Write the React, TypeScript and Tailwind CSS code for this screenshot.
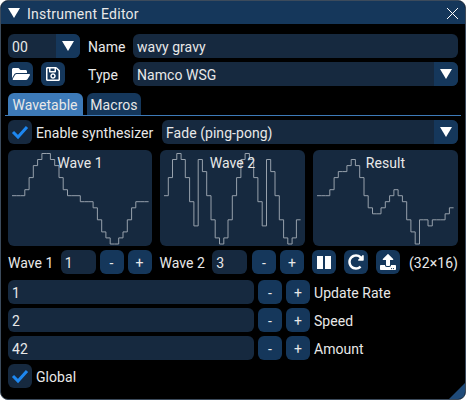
import { FaFolderOpen, FaRegSave, FaRedoAlt, FaUpload } from "react-icons/fa";

const W1 = [8,8,8,9,11,13,14,15,15,14,13,11,9,8,8,8,7,7,7,6,4,2,1,0,0,1,2,4,6,7,7,7];
const W2 = [8,11,14,15,14,11,7,3,14,12,8,4,1,0,1,4,8,11,14,15,14,11,7,3,14,12,8,4,1,0,1,4];
const W3 = [8,8,8,9,11,12,12,13,14,13,11,8,6,5,5,6,7,8,9,8,7,4,2,0,4,4,3,4,4,4,5,6];

function Tri({ className = "" }: { className?: string }) {
  return (
    <svg width="14" height="12" viewBox="0 0 14 12" className={className}>
      <polygon points="1,1 13,1 7,11" fill="#ffffff" />
    </svg>
  );
}

function Txt({ children, className = "" }: { children: React.ReactNode; className?: string }) {
  return <span className={`pt-[2px] ${className}`}>{children}</span>;
}

function Check() {
  return (
    <div className="w-6 h-6 rounded-md bg-[#16293f] flex items-center justify-center shrink-0">
      <svg width="18" height="16" viewBox="0 0 18 16">
        <polyline points="2,8 7,13 16,3" fill="none" stroke="#1d87f0" strokeWidth="3" />
      </svg>
    </div>
  );
}

function Combo({ text, className = "" }: { text: string; className?: string }) {
  return (
    <div className={`h-6 rounded-md bg-[#16293f] flex items-center overflow-hidden ${className}`}>
      <Txt className="flex-1 pl-[4px]">{text}</Txt>
      <div className="w-6 h-6 bg-[#15375b] flex items-center justify-center">
        <Tri />
      </div>
    </div>
  );
}

function Input({ text, className = "" }: { text: string; className?: string }) {
  return (
    <div className={`h-6 rounded-md bg-[#16293f] flex items-center pl-[4px] ${className}`}>
      <Txt>{text}</Txt>
    </div>
  );
}

function Btn({ children, className = "" }: { children: React.ReactNode; className?: string }) {
  return (
    <div className={`w-6 h-6 rounded-md bg-[#15375b] flex items-center justify-center shrink-0 ${className}`}>
      {children}
    </div>
  );
}

function Wave({ data, label, className = "" }: { data: number[]; label: string; className?: string }) {
  let pts = "";
  data.forEach((l, i) => {
    const y = (3.5 + (15 - l) * 6.03).toFixed(1);
    pts += `${(4 + i * 4.27).toFixed(1)},${y} ${(4 + (i + 1) * 4.27).toFixed(1)},${y} `;
  });
  return (
    <div className={`relative h-24 rounded-md bg-[#16293f] overflow-hidden ${className}`}>
      <svg width="145" height="96" viewBox="0 0 145 96" className="block">
        <polyline points={pts} fill="none" stroke="#97a1ac" strokeWidth="1" />
      </svg>
      <div className="absolute inset-x-0 top-[6px] text-center">{label}</div>
    </div>
  );
}

function ParamRow({ value, label }: { value: string; label: string }) {
  return (
    <div className="flex items-center gap-1">
      <Input text={value} className="w-[246px]" />
      <Btn><Txt>-</Txt></Btn>
      <Btn><Txt>+</Txt></Btn>
      <Txt>{label}</Txt>
    </div>
  );
}

export default function App() {
  return (
    <div
      className="relative w-[466px] h-[400px] overflow-hidden rounded-[8px] border border-[#3c4b5c] bg-black text-[14px] leading-none tracking-[0.05px] text-[#e8e8e8]"
      style={{ fontFamily: "Roboto, sans-serif" }}
    >
      <div className="h-[23px] bg-[#15375b] flex items-center pl-[6px] pr-[6px]">
        <Tri />
        <Txt className="ml-[6px] flex-1 tracking-[0.25px]">Instrument Editor</Txt>
        <svg width="14" height="14" viewBox="0 0 14 14">
          <path d="M2 2 L13 13 M13 2 L2 13" stroke="#ffffff" strokeWidth="1" fill="none" />
        </svg>
      </div>
      <div className="px-[7px] pt-[10px] flex flex-col">
        <div className="flex items-center">
          <Combo text="00" className="w-[72px]" />
          <Txt className="w-[45px] ml-2">Name</Txt>
          <Input text="wavy gravy" className="flex-1" />
        </div>
        <div className="flex items-center mt-1">
          <Btn className="w-[25px]"><FaFolderOpen size={18} color="#fff" /></Btn>
          <Btn className="ml-2"><FaRegSave size={16} color="#fff" /></Btn>
          <Txt className="w-[45px] ml-[23px]">Type</Txt>
          <Combo text="Namco WSG" className="flex-1" />
        </div>
        <div className="flex items-end gap-1 mt-[7px] h-[22px]">
          <div className="h-[22px] w-[75px] pr-px rounded-t-md bg-[#3d7ab8] flex items-center justify-center"><Txt>Wavetable</Txt></div>
          <div className="h-[22px] w-[54px] rounded-t-md bg-[#15375b] flex items-center justify-center"><Txt>Macros</Txt></div>
        </div>
        <div className="h-px bg-[#3d7ab8] -mx-[3px]" />
        <div className="flex items-center mt-1">
          <Check />
          <Txt className="ml-1 w-[126px]">Enable synthesizer</Txt>
          <Combo text="Fade (ping-pong)" className="flex-1" />
        </div>
        <div className="flex mt-[6px]">
          <Wave data={W1} label="Wave 1" className="w-[144px]" />
          <Wave data={W2} label="Wave 2" className="w-[145px] ml-2" />
          <Wave data={W3} label="Result" className="w-[145px] ml-2" />
        </div>
        <div className="flex items-center mt-1">
          <Txt className="w-[53px]">Wave 1</Txt>
          <Input text="1" className="w-[35px]" />
          <Btn className="ml-1"><Txt>-</Txt></Btn>
          <Btn className="ml-1"><Txt>+</Txt></Btn>
          <Txt className="ml-2 w-[53px]">Wave 2</Txt>
          <Input text="3" className="w-[35px]" />
          <Btn className="ml-[5px]"><Txt>-</Txt></Btn>
          <Btn className="ml-1"><Txt>+</Txt></Btn>
          <Btn className="ml-2">
            <svg width="16" height="16" viewBox="0 0 16 16">
              <path d="M1 2h6v13H1zM9 2h6v13H9z" fill="#fff" />
            </svg>
          </Btn>
          <Btn className="ml-2"><FaRedoAlt size={16} color="#fff" /></Btn>
          <Btn className="ml-2"><FaUpload size={16} color="#fff" /></Btn>
          <Txt className="ml-[9px]">(32×16)</Txt>
        </div>
        <div className="flex flex-col gap-1 mt-[6px]">
          <ParamRow value="1" label="Update Rate" />
          <ParamRow value="2" label="Speed" />
          <ParamRow value="42" label="Amount" />
          <div className="flex items-center">
            <Check />
            <Txt className="ml-1">Global</Txt>
          </div>
        </div>
      </div>
      <svg width="16" height="16" viewBox="0 0 16 16" className="absolute right-0 bottom-0">
        <polygon points="16,0 16,16 0,16" fill="#1f4a78" />
      </svg>
    </div>
  );
}
